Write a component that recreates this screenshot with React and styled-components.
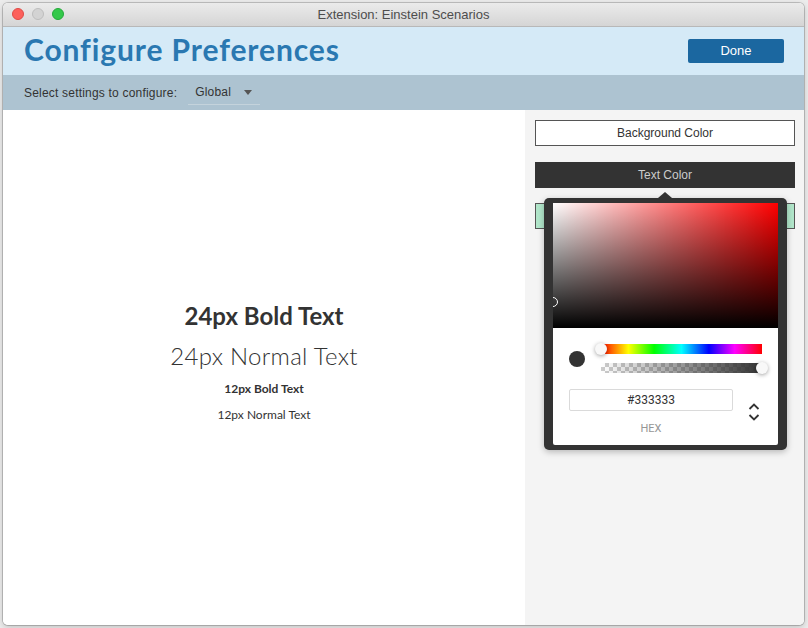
import styled, { createGlobalStyle } from 'styled-components';

const GlobalStyle = createGlobalStyle`
  html, body { margin: 0; padding: 0; }
  body {
    background: #ececec;
    font-family: "Lato", "Open Sans", sans-serif;
    overflow: hidden;
  }
`;

const App = () => {
  return (
    <>
      <GlobalStyle />
      <Desktop>
        <Window>
          <TitleBar>
            <Lights>
              <Light $color="#fc605b" $border="#de4a45" />
              <Light $color="#d3d3d3" $border="#bdbdbd" />
              <Light $color="#34c84a" $border="#24a93a" />
            </Lights>
            <WindowTitle>Extension: Einstein Scenarios</WindowTitle>
          </TitleBar>

          <Header>
            <PageTitle>Configure Preferences</PageTitle>
            <DoneButton>Done</DoneButton>
          </Header>

          <SubBar>
            <SubLabel>Select settings to configure:</SubLabel>
            <Select>
              Global
              <Caret />
            </Select>
          </SubBar>

          <Body>
            <Preview>
              <SampleText $size={24} $weight={700}>24px Bold Text</SampleText>
              <SampleText $size={24} $weight={300}>24px Normal Text</SampleText>
              <SampleText $size={12} $weight={700}>12px Bold Text</SampleText>
              <SampleText $size={12} $weight={400}>12px Normal Text</SampleText>
            </Preview>

            <Sidebar>
              <OptionButton>Background Color</OptionButton>
              <OptionButton $active>Text Color</OptionButton>
              <OptionButton $accent />

              <Popover>
                <Picker>
                  <Saturation>
                    <SatWhite />
                    <SatBlack />
                    <SatPointer />
                  </Saturation>
                  <Controls>
                    <Swatch />
                    <Sliders>
                      <HueBar>
                        <Knob style={{ left: 0 }} />
                      </HueBar>
                      <AlphaBar>
                        <AlphaFill />
                        <Knob style={{ left: '100%' }} />
                      </AlphaBar>
                    </Sliders>
                  </Controls>
                  <HexRow>
                    <HexField>
                      <HexInput>#333333</HexInput>
                      <HexLabel>HEX</HexLabel>
                    </HexField>
                    <Toggle>
                      <svg width="14" height="20" viewBox="0 0 14 20">
                        <path d="M2.5 7 L7 2.5 L11.5 7" fill="none" stroke="#333" strokeWidth="1.8" />
                        <path d="M2.5 13 L7 17.5 L11.5 13" fill="none" stroke="#333" strokeWidth="1.8" />
                      </svg>
                    </Toggle>
                  </HexRow>
                </Picker>
              </Popover>
            </Sidebar>
          </Body>
        </Window>
      </Desktop>
    </>
  );
};

export default App;

/* ============== styles ============== */

const Desktop = styled.div`
  width: 808px;
  height: 628px;
  padding: 3px 4px 3px 3px;
  box-sizing: border-box;
`;

const Window = styled.div`
  width: 801px;
  height: 622px;
  display: flex;
  flex-direction: column;
  border-radius: 5px;
  overflow: hidden;
  background: #fff;
  box-shadow: 0 0 0 1px rgba(0,0,0,0.18), 0 2px 6px rgba(0,0,0,0.2);
`;

const TitleBar = styled.div`
  height: 23px;
  flex: none;
  position: relative;
  display: flex;
  align-items: center;
  justify-content: center;
  background: linear-gradient(180deg, #ebebeb 0%, #d5d5d5 100%);
  border-bottom: 1px solid #b8b8b8;
`;

const Lights = styled.div`
  position: absolute;
  left: 9px;
  top: 5px;
  display: flex;
  gap: 8px;
`;

const Light = styled.span`
  width: 12px;
  height: 12px;
  border-radius: 50%;
  box-sizing: border-box;
  background: ${({ $color }) => $color};
  border: 0.5px solid ${({ $border }) => $border};
`;

const WindowTitle = styled.div`
  font-family: "Liberation Sans", sans-serif;
  font-size: 13px;
  color: #4d4d4d;
`;

const Header = styled.div`
  height: 48px;
  flex: none;
  display: flex;
  align-items: center;
  justify-content: space-between;
  padding: 0 20px 0 21px;
  background: #d5eaf7;
`;

const PageTitle = styled.h1`
  margin: 0 0 4px 0;
  font-family: "Lato", sans-serif;
  font-size: 30px;
  font-weight: 700;
  color: #2a78b1;
  letter-spacing: 0.9px;
`;

const DoneButton = styled.button`
  width: 96px;
  height: 24px;
  margin-bottom: 1px;
  border: none;
  border-radius: 2px;
  background: #1b67a0;
  color: #fff;
  font-family: "Liberation Sans", sans-serif;
  font-size: 13px;
  cursor: pointer;
`;

const SubBar = styled.div`
  height: 35px;
  flex: none;
  display: flex;
  align-items: flex-start;
  padding: 0 21px;
  background: #adc3d1;
`;

const SubLabel = styled.span`
  margin-top: 11px;
  font-family: "Liberation Sans", sans-serif;
  font-size: 12px;
  letter-spacing: 0.2px;
  color: #333;
`;

const Select = styled.div`
  margin: 10px 0 0 11px;
  width: 72px;
  height: 20px;
  box-sizing: border-box;
  padding: 0 8px 5px 7px;
  display: flex;
  align-items: center;
  justify-content: space-between;
  border-bottom: 1px solid #c4d3dc;
  font-family: "Liberation Sans", sans-serif;
  font-size: 12px;
  letter-spacing: 0.2px;
  color: #333;
`;

const Caret = styled.span`
  width: 0;
  height: 0;
  border-left: 4px solid transparent;
  border-right: 4px solid transparent;
  border-top: 5px solid #555;
`;

const Body = styled.div`
  flex: 1;
  display: flex;
  min-height: 0;
`;

const Preview = styled.div`
  flex: 1;
  display: flex;
  flex-direction: column;
  align-items: center;
  justify-content: center;
  padding-bottom: 12px;
  background: #fff;
`;

const SampleText = styled.div`
  font-family: "Lato", sans-serif;
  font-size: ${({ $size }) => $size}px;
  font-weight: ${({ $weight }) => $weight};
  letter-spacing: ${({ $weight }) => ($weight === 300 ? '0.3px' : '0')};
  color: #333;
  line-height: ${({ $size }) => ($size === 24 ? 40 : 26)}px;
`;

const Sidebar = styled.div`
  width: 279px;
  flex: none;
  position: relative;
  box-sizing: border-box;
  padding: 10px 9px 0 10px;
  display: flex;
  flex-direction: column;
  gap: 16px;
  background: #f4f4f4;
`;

const OptionButton = styled.div`
  height: 26px;
  box-sizing: border-box;
  display: flex;
  align-items: center;
  justify-content: center;
  font-family: "Liberation Sans", sans-serif;
  font-size: 12px;
  border: 1px solid ${({ $active }) => ($active ? '#333' : '#555')};
  background: ${({ $active, $accent }) => ($active ? '#333' : $accent ? '#b1e6ca' : '#fff')};
  color: ${({ $active }) => ($active ? '#ccc' : '#333')};
  margin-top: ${({ $accent }) => ($accent ? '-1px' : '0')};
`;

const Popover = styled.div`
  position: absolute;
  left: 19px;
  top: 88px;
  width: 243px;
  height: 252px;
  box-sizing: border-box;
  padding: 5px 9px;
  background: #333;
  border-radius: 5px;
  box-shadow: 0 2px 6px rgba(0,0,0,0.25);

  &::before {
    content: '';
    position: absolute;
    left: 114px;
    top: -6px;
    border-left: 7px solid transparent;
    border-right: 7px solid transparent;
    border-bottom: 6px solid #333;
  }
`;

const Picker = styled.div`
  width: 225px;
  height: 242px;
  background: #fff;
  display: flex;
  flex-direction: column;
  border-radius: 0 0 2px 2px;
`;

const Saturation = styled.div`
  height: 125px;
  flex: none;
  position: relative;
  background: #f00;
  overflow: hidden;
`;

const SatWhite = styled.div`
  position: absolute;
  inset: 0;
  background: linear-gradient(to right, #fff, rgba(255,255,255,0));
`;

const SatBlack = styled.div`
  position: absolute;
  inset: 0;
  background: linear-gradient(to top, #000, rgba(0,0,0,0));
`;

const SatPointer = styled.div`
  position: absolute;
  left: -5px;
  top: 94px;
  width: 10px;
  height: 10px;
  box-sizing: border-box;
  border-radius: 50%;
  border: 1.5px solid #fff;
  box-shadow: 0 0 1px rgba(0,0,0,0.6);
`;

const Controls = styled.div`
  display: flex;
  align-items: center;
  padding: 16px 16px 0 16px;
  gap: 16px;
`;

const Swatch = styled.div`
  width: 16px;
  height: 16px;
  flex: none;
  border-radius: 50%;
  background: #333;
  margin-top: 1px;
`;

const Sliders = styled.div`
  flex: 1;
  display: flex;
  flex-direction: column;
  gap: 9px;
`;

const HueBar = styled.div`
  position: relative;
  height: 10px;
  background: linear-gradient(to right, #f00 0%, #ff0 17%, #0f0 33%, #0ff 50%, #00f 67%, #f0f 83%, #f00 100%);
`;

const AlphaBar = styled.div`
  position: relative;
  height: 10px;
  background-color: #fff;
  background-image:
    linear-gradient(45deg, #ccc 25%, transparent 25%, transparent 75%, #ccc 75%),
    linear-gradient(45deg, #ccc 25%, transparent 25%, transparent 75%, #ccc 75%);
  background-size: 8px 8px;
  background-position: 0 0, 4px 4px;
`;

const AlphaFill = styled.div`
  position: absolute;
  inset: 0;
  background: linear-gradient(to right, rgba(51,51,51,0), #333);
`;

const Knob = styled.div`
  position: absolute;
  top: 50%;
  width: 12px;
  height: 12px;
  border-radius: 50%;
  background: #f8f8f8;
  transform: translate(-6px, -6px);
  box-shadow: 0 1px 4px rgba(0,0,0,0.37);
`;

const HexRow = styled.div`
  display: flex;
  align-items: flex-start;
  padding: 16px 17px 0 16px;
  gap: 14px;
`;

const HexField = styled.div`
  flex: 1;
  display: flex;
  flex-direction: column;
  align-items: center;
`;

const HexInput = styled.div`
  width: 100%;
  height: 22px;
  box-sizing: border-box;
  border: 1px solid #dadada;
  border-radius: 2px;
  display: flex;
  align-items: center;
  justify-content: center;
  font-family: "Roboto", sans-serif;
  font-size: 12px;
  color: #333;
`;

const HexLabel = styled.div`
  margin-top: 11px;
  font-family: "Roboto", sans-serif;
  font-size: 11px;
  color: #969696;
`;

const Toggle = styled.div`
  width: 14px;
  display: flex;
  margin-top: 13px;
`;
